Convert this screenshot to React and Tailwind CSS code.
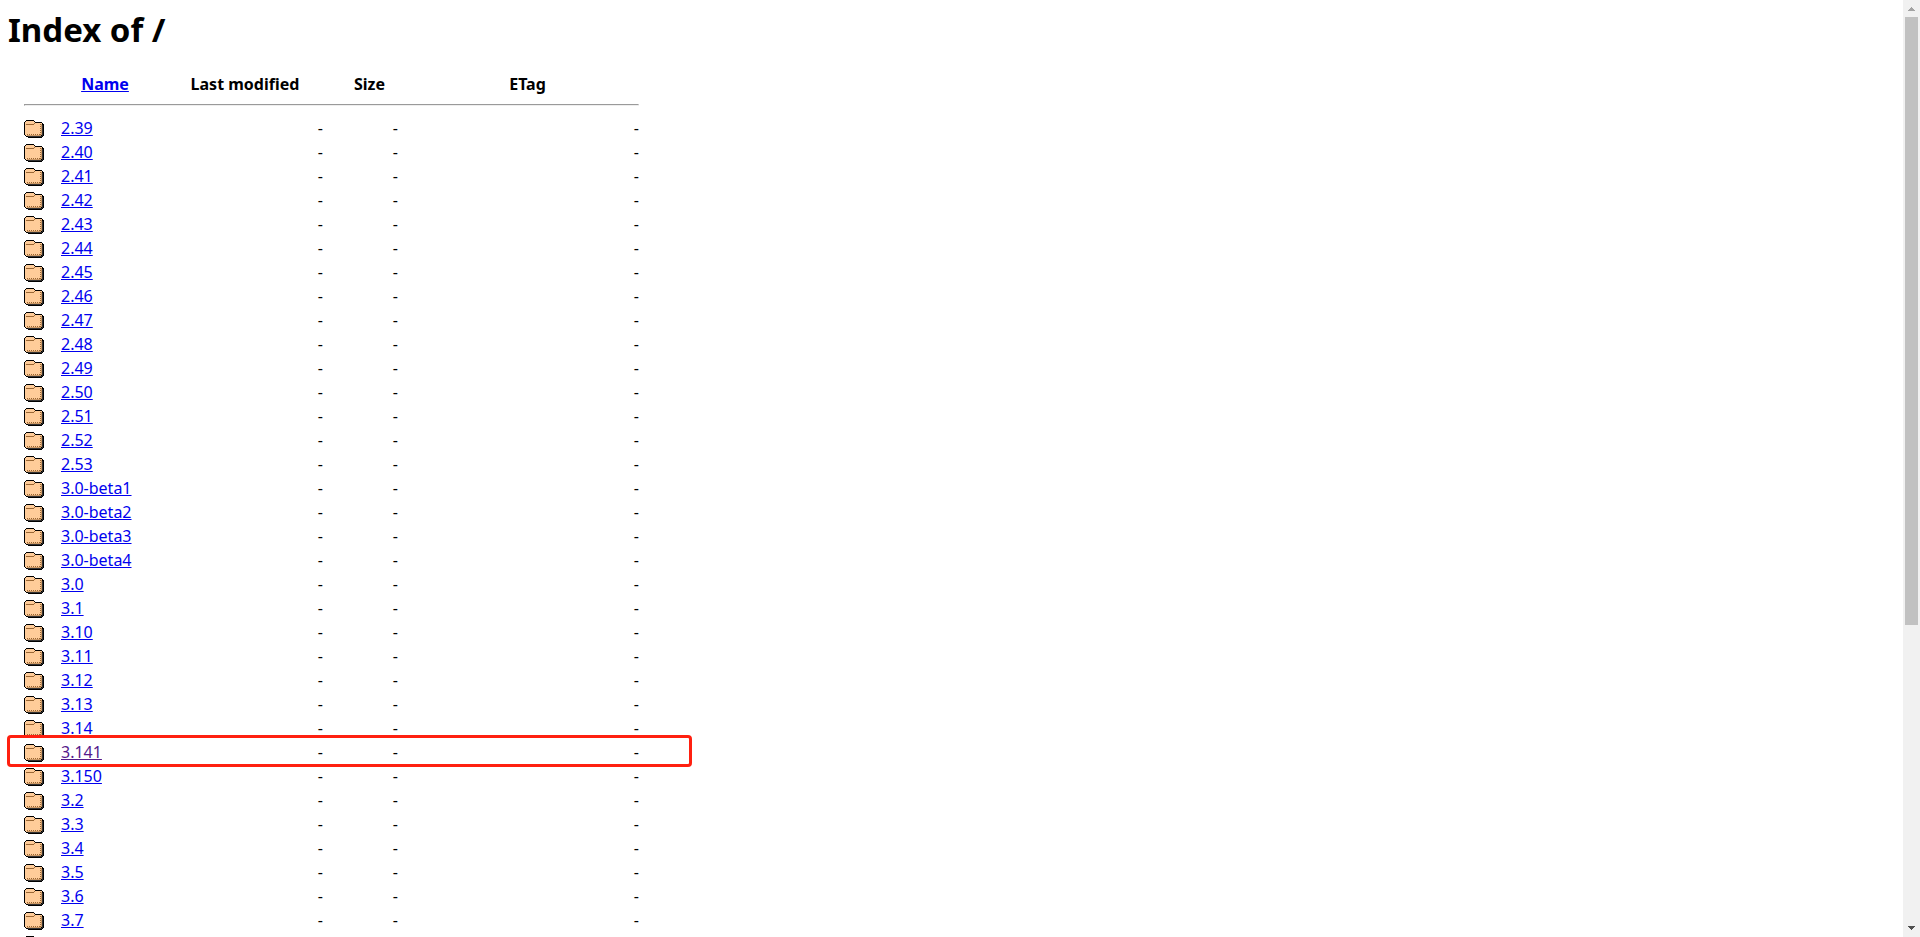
import React from 'react';

const folders = [
  '2.39', '2.40', '2.41', '2.42', '2.43', '2.44', '2.45', '2.46', '2.47', '2.48', '2.49',
  '2.50', '2.51', '2.52', '2.53', '3.0-beta1', '3.0-beta2', '3.0-beta3', '3.0-beta4',
  '3.0', '3.1', '3.10', '3.11', '3.12', '3.13', '3.14', '3.141', '3.150',
  '3.2', '3.3', '3.4', '3.5', '3.6', '3.7',
];

const current = '3.141';

function FolderIcon() {
  return (
    <svg width="20" height="18" viewBox="0 0 20 18" shapeRendering="crispEdges" className="block" aria-hidden="true">
      {/* outline and shadow */}
      <path d="M2 0h8v1h1v1h7v1h1v1h1v12h-1v1h-1v1H4v-1H2v-1H1v-1H0V2h1V1h1z" fill="#000" />
      <path d="M18 5h1v11h-1v1H4v-1h14z" fill="#333" />
      {/* body */}
      <path d="M2 1h8v1h1v1h7v12h-1v1H2v-1H1V2h1z" fill="#ffcc99" />
      {/* tab line and stitching */}
      <path d="M2 4h8v1H2zM10 3h1v1h-1z" fill="#996633" />
      <path d="M3 14.5h14M16.5 4v11" stroke="#996633" strokeDasharray="1 1" fill="none" />
      <path d="M17 4h1v11h-1zM3 15h14v1H3z" fill="#cc9966" />
    </svg>
  );
}

function Row({ name }) {
  const active = name === current;
  return (
    <tr className="relative h-6">
      <td className="pt-0.5"><FolderIcon /></td>
      <td>
        <a href={`#${name}`} className={`underline ${active ? 'text-[#551a8b]' : 'text-[#0000ee]'}`}>{name}</a>
        {active && (
          <span className="pointer-events-none absolute -top-[5px] -left-[17px] -right-[53px] h-8 rounded-sm border-3 border-[#ff2010]" />
        )}
      </td>
      <td className="pr-[18px] text-right">-</td>
      <td className="pr-[18px] text-right">-</td>
      <td className="text-right">-</td>
    </tr>
  );
}

function ScrollBar() {
  return (
    <div className="flex w-[17px] shrink-0 flex-col items-center bg-[#f1f1f1]">
      <svg width="17" height="17" viewBox="0 0 17 17" shapeRendering="crispEdges" className="shrink-0" aria-hidden="true">
        <path d="M8 7h1v1h1v1h1v1h1v1H5v-1h1V9h1V8h1z" fill="#a3a3a3" />
      </svg>
      <div className="w-full flex-1 px-0.5">
        <div className="h-[67.3%] w-[13px] bg-[#c1c1c1]" />
      </div>
      <svg width="17" height="17" viewBox="0 0 17 17" shapeRendering="crispEdges" className="shrink-0" aria-hidden="true">
        <path d="M5 6h7v1h-1v1h-1v1H9v1H8V9H7V8H6V7H5z" fill="#505050" />
      </svg>
    </div>
  );
}

function App() {
  return (
    <div className="flex h-screen overflow-hidden bg-white font-['Noto_Sans',sans-serif] text-base leading-6 text-black">
      <main className="min-w-0 flex-1 overflow-hidden px-2">
        <h1 className="pt-2 text-[33px] leading-11 font-bold">Index of /</h1>
        <table className="mt-5 ml-4 w-[615px] table-fixed border-collapse">
          <colgroup>
            <col className="w-[37px]" />
            <col className="w-[106px]" />
            <col className="w-[174px]" />
            <col className="w-[75px]" />
            <col className="w-[223px]" />
          </colgroup>
          <thead>
            <tr>
              <th />
              <th className="pr-[18px]"><a href="#name" className="text-[#0000ee] underline">Name</a></th>
              <th className="pr-[18px]">Last modified</th>
              <th className="pr-[18px]">Size</th>
              <th>ETag</th>
            </tr>
            <tr>
              <th colSpan={5} className="pt-2 pb-2.5">
                <hr className="h-0.5 border border-[#9a9a9a] border-r-[#eee] border-b-[#eee]" />
              </th>
            </tr>
          </thead>
          <tbody>
            {folders.map(name => <Row key={name} name={name} />)}
            <tr className="h-6">
              <td className="pt-0.5" colSpan={5}><FolderIcon /></td>
            </tr>
          </tbody>
        </table>
      </main>
      <ScrollBar />
    </div>
  );
}

export default App;
